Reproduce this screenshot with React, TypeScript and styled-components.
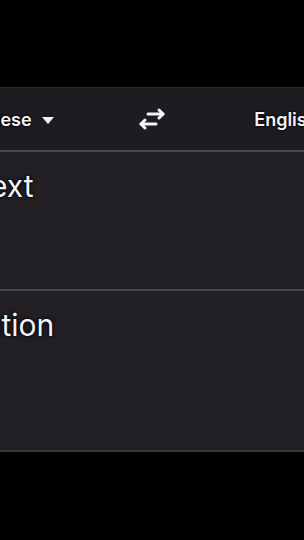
import React from "react";
import styled, { createGlobalStyle } from "styled-components";

const Global = createGlobalStyle`
  html, body { margin: 0; padding: 0; background: #000; }
  body { font-family: Inter, "Liberation Sans", Arial, sans-serif; }
`;

const Stage = styled.div`
  width: 304px;
  height: 540px;
  overflow: hidden;
  display: flex;
  flex-direction: column;
  align-items: center;
  padding-top: 87px;
  box-sizing: border-box;
  background: #000;
`;

const Panel = styled.div`
  flex-shrink: 0;
  width: 540px;
  background: #221f25;
  border-top: 1px solid #2e2b32;
  border-bottom: 2px solid #3b3740;
  display: flex;
  flex-direction: column;
`;

const Header = styled.div`
  height: 62px;
  display: flex;
  align-items: center;
  padding: 0 16px;
  background: #1f1c21;
`;

const LangSlot = styled.div`
  flex: 1;
  display: flex;
  justify-content: center;
  align-items: center;
  gap: 10px;
  color: #f4f3f7;
  font-size: 18px;
  font-weight: 600;
  text-shadow: 0 0 3px #000, 0 0 2px #000;
`;

const Caret = styled.span`
  width: 0;
  height: 0;
  border-left: 6px solid transparent;
  border-right: 6px solid transparent;
  border-top: 7px solid #f4f3f7;
  margin-top: 2px;
`;

const SwapButton = styled.div`
  width: 72px;
  display: flex;
  justify-content: center;
  align-items: center;
`;

const Divider = styled.div`
  height: 2px;
  background: #48454d;
`;

const Area = styled.div<{ $h: number }>`
  height: ${(p) => p.$h}px;
  padding: 16px 16px 0;
  box-sizing: border-box;
  color: #f4f3f7;
  font-size: 30px;
  line-height: 36px;
  text-shadow: 0 0 4px #000, 0 0 2px #000;
`;

function SwapIcon() {
  return (
    <svg width="28" height="24" viewBox="0 0 28 24" fill="none">
      <g stroke="#f6f6f8" strokeWidth="3" strokeLinecap="round" strokeLinejoin="round">
        <path d="M10 7 H25" />
        <path d="M21 3 L25 7 L21 11" />
        <path d="M3 17 H18" />
        <path d="M7 13 L3 17 L7 21" />
      </g>
    </svg>
  );
}

export default function App() {
  return (
    <>
      <Global />
      <Stage>
        <Panel>
          <Header>
            <LangSlot>
              Chinese <Caret />
            </LangSlot>
            <SwapButton>
              <SwapIcon />
            </SwapButton>
            <LangSlot>
              English <Caret />
            </LangSlot>
          </Header>
          <Divider />
          <Area $h={137}>Enter text</Area>
          <Divider />
          <Area $h={159}>Translation</Area>
        </Panel>
      </Stage>
    </>
  );
}
